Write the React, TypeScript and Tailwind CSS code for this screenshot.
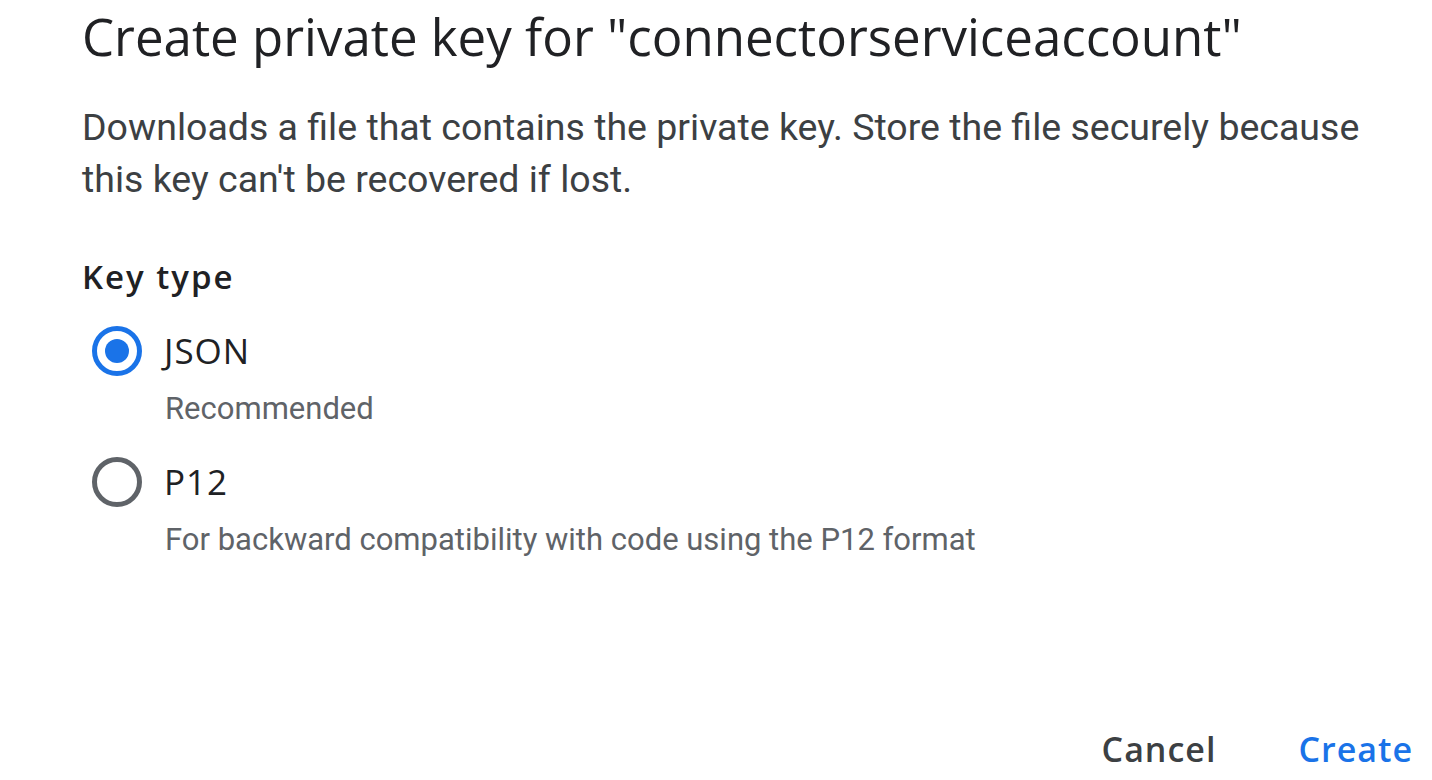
const titleFont = "font-['Open_Sans','Noto_Sans',sans-serif]"

function Radio({ checked }: { checked?: boolean }) {
  return (
    <span
      className={
        "flex h-[50px] w-[50px] shrink-0 items-center justify-center rounded-full border-[5px] " +
        (checked ? "border-[#1a73e8]" : "border-[#5f6368]")
      }
    >
      {checked && <span className="h-[24px] w-[24px] rounded-full bg-[#1a73e8]" />}
    </span>
  )
}

function Option({ label, hint, checked }: { label: string; hint: string; checked?: boolean }) {
  return (
    <div className="flex flex-col">
      <div className="flex h-[50px] items-center gap-[22px] pl-[10px]">
        <Radio checked={checked} />
        <span className={titleFont + " text-[35px] leading-[50px] tracking-[1px] text-[#202124]"}>{label}</span>
      </div>
      <div className="pl-[83px] pt-[15px] text-[31px] leading-[36px] text-[#5f6368]">{hint}</div>
    </div>
  )
}

export default function App() {
  return (
    <div className="flex h-[780px] w-[1432px] flex-col overflow-hidden bg-white pl-[82px] pr-[18px] font-['Roboto','Liberation_Sans',sans-serif]">
      <h1 className={titleFont + " pt-[4px] text-[51px] leading-[64px] font-normal text-[#202124]"}>
        Create private key for "connectorserviceaccount"
      </h1>
      <p className="mt-[33px] text-[37.5px] leading-[52px] text-[#3c4043]">
        Downloads a file that contains the private key. Store the file securely because this key can't be recovered if lost.
      </p>
      <div className={titleFont + " mt-[52px] text-[33px] leading-[40px] font-semibold tracking-[2px] text-[#202124]"}>
        Key type
      </div>
      <div className="mt-[29px] flex flex-col gap-[30px]">
        <Option label="JSON" hint="Recommended" checked />
        <Option label="P12" hint="For backward compatibility with code using the P12 format" />
      </div>
      <div className="mt-auto flex justify-end gap-[82px] pb-[11px] pr-[1px]">
        <button className={titleFont + " text-[34px] leading-[40px] font-semibold tracking-[1px] text-[#3c4043]"}>Cancel</button>
        <button className={titleFont + " text-[34px] leading-[40px] font-semibold tracking-[1px] text-[#1a73e8]"}>Create</button>
      </div>
    </div>
  )
}
